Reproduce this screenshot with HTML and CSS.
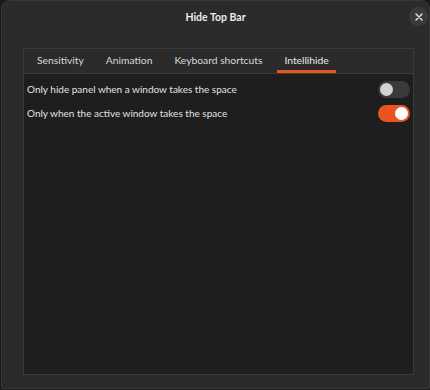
FILE: index.html
```html
<!DOCTYPE html>
<html>
<head>
<meta charset="utf-8">
<link rel="stylesheet" href="styles.css">
</head>
<body>
<div class="window">
  <header class="headerbar">
    <div class="title">Hide Top Bar</div>
    <button class="close" aria-label="Close">
      <svg width="8" height="8" viewBox="0 0 8 8"><path d="M1 1L7 7M7 1L1 7" stroke="#e8e8e8" stroke-width="1.4" stroke-linecap="round"/></svg>
    </button>
  </header>
  <div class="notebook">
    <nav class="tabs">
      <div class="tab">Sensitivity</div>
      <div class="tab">Animation</div>
      <div class="tab">Keyboard shortcuts</div>
      <div class="tab active">Intellihide</div>
    </nav>
    <div class="page">
      <div class="row">
        <span class="label">Only hide panel when a window takes the space</span>
        <span class="switch"><span class="knob"></span></span>
      </div>
      <div class="row">
        <span class="label">Only when the active window takes the space</span>
        <span class="switch on"><span class="knob"></span></span>
      </div>
    </div>
  </div>
</div>
</body>
</html>
```
FILE: styles.css
```css
html, body {
  margin: 0;
  padding: 0;
  background: #1a1a1a;
  width: 430px;
  height: 390px;
  overflow: hidden;
}
body {
  font-family: Lato, "Noto Sans", sans-serif;
  font-size: 10px;
  color: #e6e6e6;
}
.window {
  box-sizing: border-box;
  width: 429px;
  height: 389px;
  margin-left: 1px;
  background: #2b2b2b;
  border: 1px solid #383838;
  border-radius: 9px 9px 2px 2px;
  display: flex;
  flex-direction: column;
}
.headerbar {
  height: 31px;
  position: relative;
  display: flex;
  align-items: center;
  justify-content: center;
}
.title {
  font-weight: bold;
  font-size: 10.5px;
  color: #ececec;
}
.close {
  position: absolute;
  right: 1px;
  top: 6px;
  width: 19px;
  height: 19px;
  border-radius: 50%;
  background: #3a3a3a;
  border: none;
  padding: 0;
  display: flex;
  align-items: center;
  justify-content: center;
}
.notebook {
  margin: 16px 15px 13px 21px;
  flex: 1;
  border: 1px solid #3b3b3b;
  display: flex;
  flex-direction: column;
}
.tabs {
  display: flex;
  height: 24px;
  padding-left: 2px;
  border-bottom: 1px solid #3b3b3b;
  background: #2b2b2b;
  font-size: 10.3px;
}
.tab {
  padding: 0 7px;
  margin: 0 4px;
  line-height: 22px;
  color: #d8d8d8;
  border-bottom: 3px solid transparent;
  height: 21px;
}
.tab.active {
  border-bottom-color: #e95420;
  color: #e8e8e8;
}
.page {
  flex: 1;
  background: #1e1e1e;
  padding: 3px 3px 0 3px;
}
.row {
  display: flex;
  align-items: center;
  justify-content: space-between;
  height: 24px;
}
.label {
  color: #e2e2e2;
}
.switch {
  width: 32px;
  height: 17px;
  border-radius: 9px;
  background: #3a3a3a;
  display: flex;
  align-items: center;
  padding: 0 2px;
  box-sizing: border-box;
}
.knob {
  width: 13px;
  height: 13px;
  border-radius: 50%;
  background: #d2d2d2;
}
.switch.on {
  background: #e95420;
  justify-content: flex-end;
}
.switch.on .knob {
  background: #ffffff;
}
```
